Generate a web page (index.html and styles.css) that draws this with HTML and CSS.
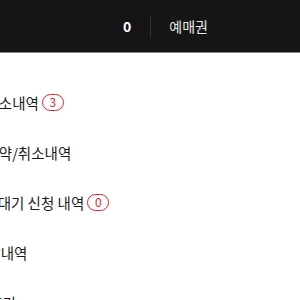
FILE: index.html
```html
<!doctype html>
<html>
<head>
    <meta charset="utf-8">
    <title>마이페이지</title>
    <meta name="viewport" content="width=device-width, initial-scale=1">
    <link rel="stylesheet" href="styles.css">
</head>
<body>
<div class="topbar">
    <span class="count">0</span>
    <span class="divider"></span>
    <span class="voucher">예매권</span>
</div>

<ul class="menu">
    <li>취소내역<span class="badge">3</span></li>
    <li>예약/취소내역</li>
    <li class="shift">취소대기 신청 내역<span class="badge">0</span></li>
    <li class="shift-more">관람내역</li>
    <li class="shift-most">공연후기</li>
</ul>
</body>
</html>
```

FILE: styles.css
```css
body {
    margin: 0;
    font-family: "Noto Sans CJK KR", "Noto Sans", sans-serif;
    background: #fff;
    overflow: hidden;
}

/* 상단 바 */
.topbar {
    display: flex;
    align-items: center;
    height: 52px;
    padding-left: 123px;
    background-color: #151515;
    border-bottom: 1px solid #8a8a8a;
}

.count {
    color: #fff;
    font-size: 14px;
    font-weight: bold;
}

.divider {
    width: 1px;
    height: 21px;
    margin: 0 18px 0 19px;
    background-color: #333;
}

.voucher {
    color: #e8e8e8;
    font-size: 14px;
}

/* 메뉴 목록 (왼쪽이 잘린 상태) */
.menu {
    list-style: none;
    margin: 24px 0 0 -14.5px;
    padding: 0;
}

.menu li {
    display: flex;
    align-items: center;
    height: 50px;
    font-size: 14.5px;
    color: #1a1a1a;
}

.menu li.shift {
    margin-left: -14.5px;
}

.menu li.shift-more {
    margin-left: -11.5px;
}

.menu li.shift-most {
    margin-left: -23px;
}

.badge {
    display: inline-flex;
    align-items: center;
    justify-content: center;
    box-sizing: border-box;
    width: 22px;
    height: 17px;
    margin-left: 3px;
    border: 1.5px solid #e2232c;
    border-radius: 9px;
    color: #e2232c;
    font-size: 12px;
    line-height: 1;
}
```
